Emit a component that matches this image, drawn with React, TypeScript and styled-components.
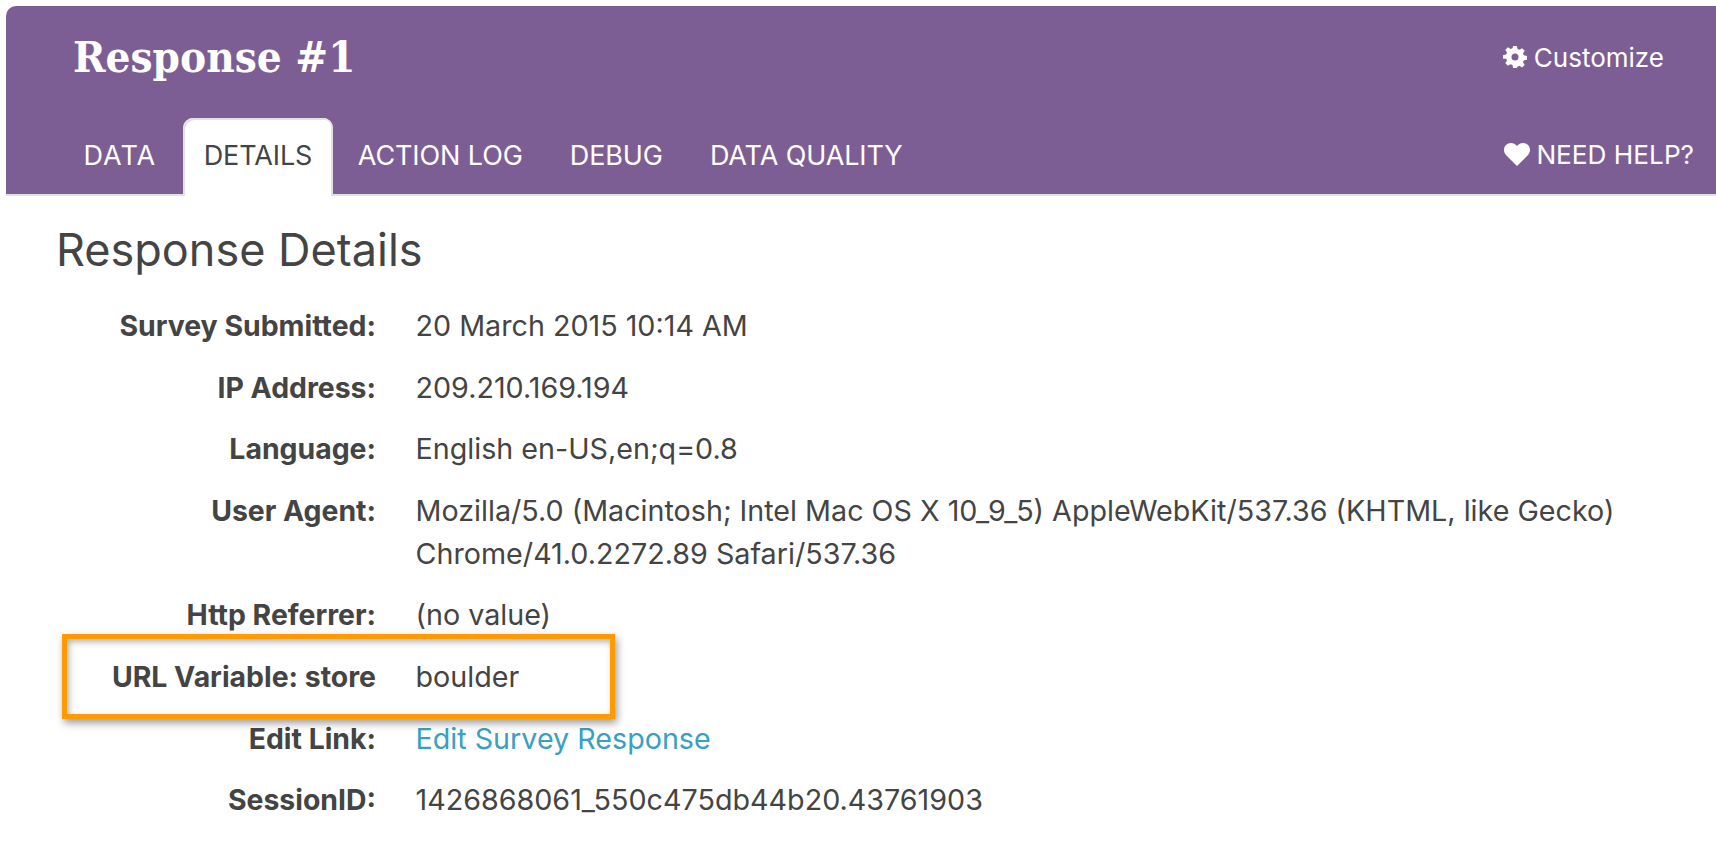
import React from "react";
import styled, { createGlobalStyle } from "styled-components";

const Global = createGlobalStyle`
  html, body { margin: 0; padding: 0; background: #fff; }
  body { width: 1716px; height: 854px; overflow: hidden; font-family: "Inter", "Liberation Sans", sans-serif; color: #444; }
`;

const Page = styled.div`
  padding: 6px 0 0 6px;
`;

const Header = styled.header`
  background: #7d5e94;
  border-radius: 10px 0 0 0;
  border-bottom: 2px solid #e2e2e2;
  height: 188px;
  display: flex;
  flex-direction: column;
  justify-content: space-between;
`;

const TopRow = styled.div`
  display: flex;
  justify-content: space-between;
  align-items: center;
  padding: 25px 52px 0 67px;
`;

const Title = styled.h1`
  margin: 0;
  font-family: "DejaVu Serif Condensed", "DejaVu Serif", serif;
  font-stretch: condensed;
  font-weight: 700;
  font-size: 43.6px;
  line-height: 52px;
  color: #fff;
`;

const Customize = styled.div`
  display: flex;
  align-items: center;
  gap: 7px;
  color: #fff;
  font-size: 26px;
`;

const TabRow = styled.div`
  display: flex;
  align-items: flex-end;
  justify-content: space-between;
  padding: 0 22px 0 54px;
  margin-bottom: -2px;
`;

const Tabs = styled.nav`
  display: flex;
  align-items: flex-end;
`;

const Tab = styled.a<{ $active?: boolean; $spacing?: number }>`
  height: 78px;
  box-sizing: border-box;
  padding: 0 ${(p) => (p.$active ? "21px" : "23.5px")} 4px;
  margin: 0 ${(p) => (p.$active ? "1px 0 3px" : "0")};
  display: flex;
  align-items: center;
  font-size: 27px;
  letter-spacing: ${(p) => p.$spacing ?? -0.1}px;
  border-radius: 10px 10px 0 0;
  color: ${(p) => (p.$active ? "#444" : "#fff")};
  background: ${(p) => (p.$active ? "#fff" : "transparent")};
  ${(p) => (p.$active ? "box-shadow: inset 2px 2px 0 #e2e2e2, inset -2px 0 0 #e2e2e2;" : "")}
`;

const Help = styled.div`
  display: flex;
  align-items: center;
  gap: 6px;
  color: #fff;
  font-size: 26.2px;
  height: 78px;
  padding-bottom: 5px;
  box-sizing: border-box;
`;

const Main = styled.main`
  padding: 26px 0 0 50px;
`;

const Heading = styled.h2`
  margin: 0 0 26px;
  font-weight: 400;
  font-size: 45px;
  line-height: 56px;
  color: #444;
`;

const Rows = styled.dl`
  margin: 0;
  display: grid;
  grid-template-columns: 320px 1fr;
  column-gap: 39.5px;
  row-gap: 18.6px;
  font-size: 28.7px;
  line-height: 43px;
`;

const Label = styled.dt`
  font-weight: 700;
  font-size: 28.4px;
  text-align: right;
  white-space: nowrap;
  color: #444;
`;

const Value = styled.dd`
  margin: 0;
  color: #444;
  max-width: 1260px;
`;

const Link = styled.a`
  color: #38a0c1;
`;

const Highlight = styled.div`
  grid-column: 1 / -1;
  display: grid;
  grid-template-columns: 320px 1fr;
  column-gap: 39.5px;
  position: relative;
  &::after {
    content: "";
    position: absolute;
    left: 6px;
    top: -21px;
    width: 553px;
    height: 85px;
    box-sizing: border-box;
    border: 5px solid #ff9a00;
    box-shadow: 2px 4px 8px rgba(0, 0, 0, 0.4), inset 2px 3px 6px rgba(0, 0, 0, 0.3);
  }
`;

const Gear = () => (
  <svg width="24" height="24" viewBox="-1 0 26 24" fill="#fff">
    <path
      fillRule="evenodd"
      d="M10 0h4l.7 3.300 2.100.9L19.700 2.400l2.800 2.800-1.800 2.900.9 2.100 3.400.7v4l-3.400.7-.9 2.100 1.800 2.900-2.800 2.800-2.900-1.800-2.100.9L14 24h-4l-.7-3.300-2.100-.9-2.900 1.800-2.800-2.800 1.800-2.900-.9-2.100L-1 14v-4l3.400-.7.9-2.100-1.800-2.900 2.800-2.800 2.900 1.800 2.100-.9zM12 8.200a3.800 3.800 0 1 0 0 7.600 3.800 3.800 0 0 0 0-7.600z"
    />
  </svg>
);

const Heart = () => (
  <svg width="26" height="23" viewBox="0 0 26 23" fill="#fff">
    <path d="M13 23 2.200 12.200C-.7 9.200-.7 4.800 2 2.100c2.700-2.700 7.300-2.800 10 0l1 1 1-1c2.700-2.800 7.300-2.700 10 0 2.700 2.700 2.700 7.100-.2 10.100z" />
  </svg>
);

export default function App() {
  return (
    <Page>
      <Global />
      <Header>
        <TopRow>
          <Title>Response #1</Title>
          <Customize>
            <Gear />
            Customize
          </Customize>
        </TopRow>
        <TabRow>
          <Tabs>
            <Tab $spacing={1}>DATA</Tab>
            <Tab $active>DETAILS</Tab>
            <Tab>ACTION LOG</Tab>
            <Tab>DEBUG</Tab>
            <Tab>DATA QUALITY</Tab>
          </Tabs>
          <Help>
            <Heart />
            NEED HELP?
          </Help>
        </TabRow>
      </Header>
      <Main>
        <Heading>Response Details</Heading>
        <Rows>
          <Label>Survey Submitted:</Label>
          <Value>20 March 2015 10:14 AM</Value>
          <Label>IP Address:</Label>
          <Value>209.210.169.194</Value>
          <Label>Language:</Label>
          <Value>English en-US,en;q=0.8</Value>
          <Label>User Agent:</Label>
          <Value>
            Mozilla/5.0 (Macintosh; Intel Mac OS X 10_9_5) AppleWebKit/537.36 (KHTML, like Gecko)
            Chrome/41.0.2272.89 Safari/537.36
          </Value>
          <Label>Http Referrer:</Label>
          <Value>(no value)</Value>
          <Highlight>
            <Label>URL Variable: store</Label>
            <Value>boulder</Value>
          </Highlight>
          <Label>Edit Link:</Label>
          <Value>
            <Link>Edit Survey Response</Link>
          </Value>
          <Label>SessionID:</Label>
          <Value>1426868061_550c475db44b20.43761903</Value>
        </Rows>
      </Main>
    </Page>
  );
}
